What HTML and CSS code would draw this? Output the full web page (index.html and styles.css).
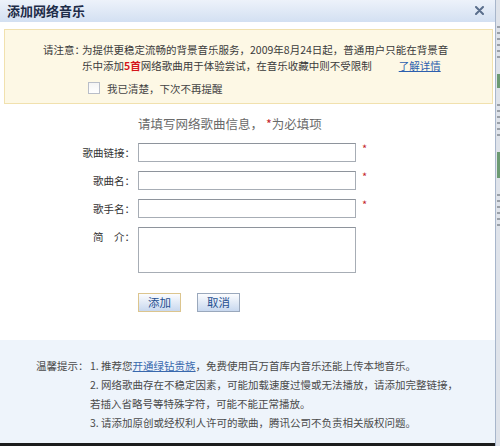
FILE: index.html
```html
<!DOCTYPE html>
<html lang="zh-CN">
<head>
<meta charset="UTF-8">
<meta name="viewport" content="width=device-width, initial-scale=1.0">
<title>添加网络音乐</title>
<link rel="stylesheet" href="styles.css">
</head>
<body>
<div class="page">
    <div class="dialog">
        <div class="titlebar">
            <h1>添加网络音乐</h1>
            <svg class="close" width="9" height="9" viewBox="0 0 9 9">
                <path d="M1 1 L8 8 M8 1 L1 8" stroke="#5a6e8c" stroke-width="2" stroke-linecap="round"/>
            </svg>
        </div>

        <div class="notice">
            <div class="notice-main">
                <span class="notice-label">请注意：</span>
                <p class="notice-text">为提供更稳定流畅的背景音乐服务，2009年8月24日起，普通用户只能在背景音<br>乐中添加<b class="hot">5首</b>网络歌曲用于体验尝试，在音乐收藏中则不受限制<a class="more" href="#">了解详情</a></p>
            </div>
            <label class="remember">
                <span class="checkbox"></span>
                我已清楚，下次不再提醒
            </label>
        </div>

        <form class="song-form">
            <p class="form-title">请填写网络歌曲信息，<span class="star">*</span>为必填项</p>

            <label class="field-label" for="songUrl">歌曲链接：</label>
            <input class="field" type="text" id="songUrl">
            <span class="star">*</span>

            <label class="field-label" for="songName">歌曲名：</label>
            <input class="field" type="text" id="songName">
            <span class="star">*</span>

            <label class="field-label" for="singer">歌手名：</label>
            <input class="field" type="text" id="singer">
            <span class="star">*</span>

            <label class="field-label" for="intro">简　介：</label>
            <textarea class="field intro" id="intro"></textarea>
            <span></span>

            <div class="buttons">
                <button type="button" class="btn btn-focus">添加</button>
                <button type="button" class="btn">取消</button>
            </div>
        </form>

        <div class="tips">
            <span class="tips-label">温馨提示：</span>
            <p class="tips-text">1. 推荐您<a href="#">开通绿钻贵族</a>，免费使用百万首库内音乐还能上传本地音乐。<br>2. 网络歌曲存在不稳定因素，可能加载速度过慢或无法播放，请添加完整链接，<br>若插入省略号等特殊字符，可能不能正常播放。<br>3. 请添加原创或经权利人许可的歌曲，腾讯公司不负责相关版权问题。</p>
        </div>
    </div>

    <div class="backdrop">
        <div class="mark mark-gray"></div>
        <div class="mark mark-green"></div>
        <div class="mark mark-gray"></div>
        <div class="mark mark-green tall"></div>
        <div class="mark mark-gray"></div>
    </div>
</div>
</body>
</html>
```

FILE: styles.css
```css
* {
    box-sizing: border-box;
}

body {
    margin: 0;
    font-family: "Noto Sans CJK SC", "Liberation Sans", sans-serif;
    font-size: 10.5px;
    color: #3a3a3a;
    background-color: #fff;
}

.page {
    display: flex;
    width: 500px;
    height: 446px;
}

.dialog {
    display: flex;
    flex-direction: column;
    width: 495px;
    background-color: #fff;
    border-bottom: 3px solid #1c1c1c;
}

.titlebar {
    display: flex;
    align-items: center;
    justify-content: space-between;
    height: 22px;
    padding: 0 11px 0 7px;
    background: linear-gradient(#edf2fa, #d3e0f2);
}

.titlebar h1 {
    margin: 0;
    font-size: 13px;
    line-height: 22px;
    font-weight: bold;
    color: #1e2c48;
}

.close {
    margin-top: -2px;
}

.notice {
    margin: 7px 2px 0 4px;
    height: 75px;
    padding: 12px 0 0 38px;
    background-color: #fdf8e5;
    border: 1px solid #f1e1ae;
}

.notice-main {
    display: flex;
    line-height: 16px;
    white-space: nowrap;
}

.notice-label {
    width: 39px;
    flex-shrink: 0;
}

.notice-text {
    margin: 0;
}

.hot {
    color: #d4161b;
}

.more {
    margin-left: 27px;
    color: #2d5fae;
}

.remember {
    display: flex;
    align-items: center;
    height: 16px;
    margin: 6px 0 0 45px;
    color: #444;
}

.checkbox {
    width: 12px;
    height: 12px;
    margin-right: 7px;
    border: 1px solid #b9bec8;
    background: linear-gradient(#f4f4f4, #fff);
}

.song-form {
    flex: 1;
    display: grid;
    grid-template-columns: 135px 218px auto;
    grid-auto-rows: min-content;
    column-gap: 3px;
    row-gap: 9px;
    align-items: center;
    margin: 0;
    padding-top: 11px;
}

.form-title {
    grid-column: 2 / span 2;
    margin: 0 0 1px;
    font-size: 12.5px;
    line-height: 18px;
    color: #6a6a6a;
}

.form-title .star {
    font-size: 12.5px;
}

.field-label {
    text-align: right;
    color: #333;
    line-height: 19px;
}

.field {
    height: 19px;
    margin: 0;
    border: 1px solid #a7adb5;
    border-top-color: #8e949c;
    background-color: #fff;
    font: inherit;
    resize: none;
}

.intro {
    height: 46px;
    align-self: start;
}

.song-form > .field-label:nth-last-of-type(1) {
    align-self: start;
}

.star {
    align-self: start;
    margin-left: 3px;
    color: #c4262b;
    font-size: 11px;
    line-height: 10px;
}

.buttons {
    grid-column: 2;
    display: flex;
    gap: 16px;
    margin-top: 11px;
}

.btn {
    width: 43px;
    height: 19px;
    padding: 0;
    border: 1px solid #9aa8bc;
    background: linear-gradient(#fbfcfe, #c8d8ef);
    color: #1f4f90;
    font-family: inherit;
    font-size: 11.5px;
    line-height: 17px;
    cursor: pointer;
}

.btn-focus {
    border-color: #dcc58e;
}

.tips {
    display: flex;
    height: 103px;
    padding: 16px 0 0 36px;
    background-color: #eef4fb;
    line-height: 19px;
    color: #4a4a4a;
    white-space: nowrap;
}

.tips-label {
    width: 54px;
    flex-shrink: 0;
}

.tips-text {
    margin: 0;
}

.tips-text a {
    color: #3868ad;
}

.backdrop {
    display: flex;
    flex-direction: column;
    gap: 12px;
    width: 5px;
    padding: 22px 0 0 1px;
    background-color: #dfe3ea;
    border-left: 1px solid #a8b6cb;
}

.mark {
    height: 14px;
}

.mark-gray {
    height: 40px;
    background: repeating-linear-gradient(#dfe3ea 0 4px, #9aa0a8 4px 6px);
}

.mark-green {
    background-color: #6c9a72;
}

.tall {
    height: 26px;
}
```
